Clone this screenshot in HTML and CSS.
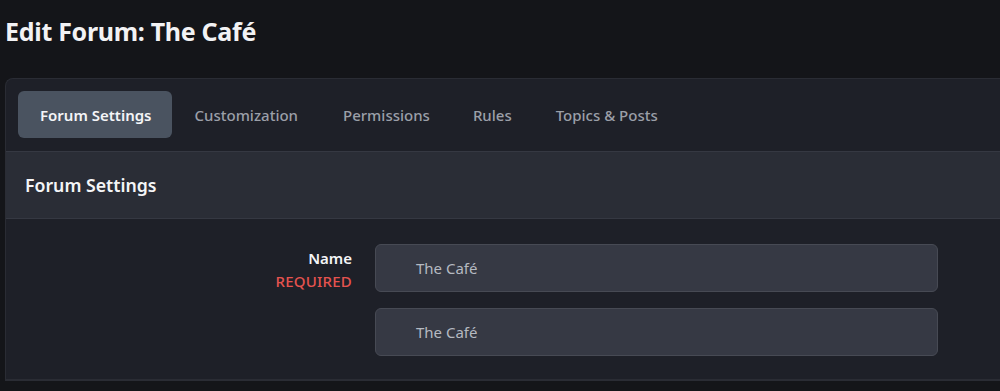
FILE: index.html
```html
<!DOCTYPE html>
<html lang="en">
<head>
<meta charset="utf-8">
<title>Edit Forum: The Café</title>
<link rel="stylesheet" href="styles.css">
</head>
<body>
<h1 class="page-title">Edit Forum: The Café</h1>
<div class="card">
  <nav class="tabs">
    <a class="tab active">Forum Settings</a>
    <a class="tab">Customization</a>
    <a class="tab">Permissions</a>
    <a class="tab">Rules</a>
    <a class="tab">Topics &amp; Posts</a>
  </nav>
  <div class="section-head">Forum Settings</div>
  <div class="form-body">
    <div class="form-row">
      <div class="label-col">
        <div class="label">Name</div>
        <div class="required">REQUIRED</div>
      </div>
      <div class="inputs">
        <div class="input">The Café</div>
        <div class="input">The Café</div>
      </div>
    </div>
  </div>
</div>
</body>
</html>
```
FILE: styles.css
```css
* { box-sizing: border-box; }
html, body { margin: 0; height: 100%; }
body {
  background: #141519;
  font-family: "Noto Sans", "Open Sans", sans-serif;
  color: #f0f0f2;
  padding: 0 0 0 5px;
  overflow: hidden;
}
.page-title {
  margin: 0;
  padding-top: 15px;
  height: 78px;
  font-size: 25px;
  font-weight: 700;
  letter-spacing: -0.3px;
  color: #f2f2f4;
  line-height: 33px;
}
.card {
  background: #1e2028;
  border: 1px solid #2a2c34;
  border-right: none;
  border-radius: 8px 0 0 0;
  width: calc(100% + 20px);
}
.tabs {
  display: flex;
  gap: 2px;
  padding: 12px 12px 13px;
}
.tab {
  display: block;
  height: 47px;
  line-height: 47px;
  padding: 1px 21px 0;
  border-radius: 6px;
  font-size: 15px;
  font-weight: 500;
  color: #9b9fa8;
}
.tab:nth-child(2) { padding-right: 22px; }
.tab:nth-child(3) { padding-right: 20px; }
.tab.active {
  background: #4a5360;
  color: #f4f5f7;
  font-weight: 600;
  padding: 1px 20px 0 22px;
}
.section-head {
  background: #2a2d36;
  border-top: 1px solid #353842;
  border-bottom: 1px solid #353842;
  height: 68px;
  padding: 0 19px;
  line-height: 66px;
  font-size: 17.7px;
  font-weight: 600;
  color: #f4f5f7;
}
.form-body {
  padding: 25px 0 23px;
  border-bottom: 1px solid #2a2c34;
}
.form-row {
  display: flex;
  gap: 23px;
}
.label-col {
  width: 346px;
  text-align: right;
  padding-top: 3px;
}
.label {
  font-size: 15px;
  font-weight: 600;
  line-height: 22px;
  color: #f4f5f7;
}
.required {
  font-size: 15px;
  font-weight: 500;
  line-height: 24px;
  letter-spacing: 0.2px;
  color: #e5534f;
}
.inputs {
  display: flex;
  flex-direction: column;
  gap: 16px;
  width: 563px;
}
.input {
  height: 48px;
  background: #363944;
  border: 1px solid #474a54;
  border-radius: 6px;
  padding-left: 40px;
  line-height: 46px;
  font-size: 15px;
  color: #b5b9c1;
}
```
